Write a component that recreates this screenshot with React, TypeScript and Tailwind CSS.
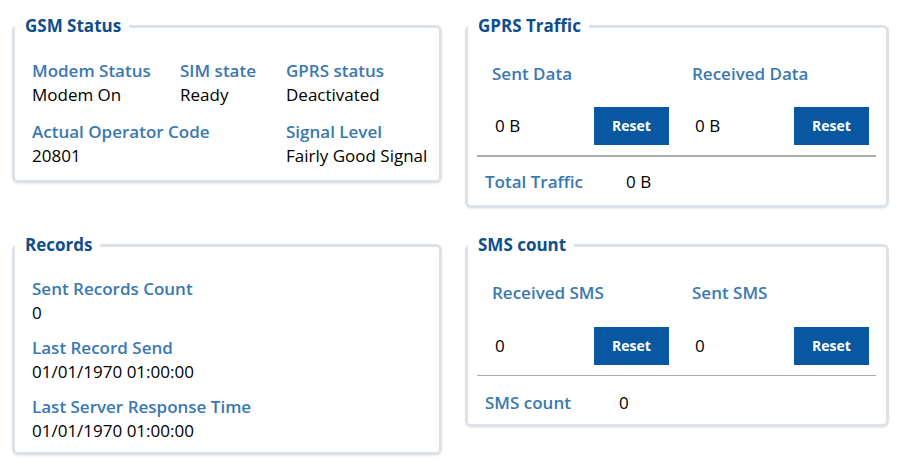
import React from "react";

const Label = ({ children }: { children: React.ReactNode }) => (
  <div className="text-[#3a78b2] font-semibold text-[17px] leading-[24px] whitespace-nowrap">{children}</div>
);
const Value = ({ children }: { children: React.ReactNode }) => (
  <div className="text-black text-[17px] leading-[24px] whitespace-nowrap">{children}</div>
);

const Box = ({ title, className, children }: { title: string; className?: string; children: React.ReactNode }) => (
  <fieldset className={"min-w-0 p-0 m-0 border-[3px] border-[#dde2e7] rounded-[6px] shadow-[0_1px_2px_rgba(0,0,0,0.08)] " + (className ?? "")}>
    <legend className="ml-0 pl-[10px] pr-[8px] text-[#0e4e8d] font-bold text-[17px] leading-[22px]">{title}</legend>
    {children}
  </fieldset>
);

const ResetBtn = () => (
  <button className="shrink-0 w-[75px] h-[38px] bg-[#0758a0] text-white font-bold text-[14px] leading-[38px]">Reset</button>
);

const Counter = ({ value }: { value: string }) => (
  <div className="w-[200px] shrink-0 flex items-center">
    <div className="w-[102px] shrink-0 pl-[3px]"><Value>{value}</Value></div>
    <ResetBtn />
  </div>
);

export default function App() {
  return (
    <div className="w-[912px] h-[471px] bg-white font-['Segoe_UI','Open_Sans',sans-serif] grid grid-cols-[430px_424px] grid-rows-[194px_230px] gap-x-[23px] gap-y-[25px] pl-[12px] pt-[15px]">
      <Box title="GSM Status" className="h-[168px]">
        <div className="grid grid-cols-[148px_106px_auto] gap-y-[13px] px-[17px] pt-[22px]">
          <div>
            <Label>Modem Status</Label>
            <Value>Modem On</Value>
          </div>
          <div>
            <Label>SIM state</Label>
            <Value>Ready</Value>
          </div>
          <div>
            <Label>GPRS status</Label>
            <Value>Deactivated</Value>
          </div>
          <div className="col-span-2">
            <Label>Actual Operator Code</Label>
            <Value>20801</Value>
          </div>
          <div>
            <Label>Signal Level</Label>
            <Value>Fairly Good Signal</Value>
          </div>
        </div>
      </Box>

      <Box title="GPRS Traffic" className="h-[193px]">
        <div className="pt-[25px]">
          <div className="flex pl-[24px]">
            <div className="w-[200px] shrink-0"><Label>Sent Data</Label></div>
            <div className="w-[200px] shrink-0"><Label>Received Data</Label></div>
          </div>
          <div className="flex pl-[24px] mt-[21px]">
            <Counter value="0 B" />
            <Counter value="0 B" />
          </div>
          <div className="h-[2px] bg-[#a9abad] mt-[10px] ml-[9px] mr-[10px]" />
          <div className="flex items-center mt-[13px] pl-[17px]">
            <div className="w-[141px] shrink-0"><Label>Total Traffic</Label></div>
            <Value>0 B</Value>
          </div>
        </div>
      </Box>

      <Box title="Records" className="h-[221px]">
        <div className="flex flex-col gap-[11px] px-[17px] pt-[21px]">
          <div>
            <Label>Sent Records Count</Label>
            <Value>0</Value>
          </div>
          <div>
            <Label>Last Record Send</Label>
            <Value>01/01/1970 01:00:00</Value>
          </div>
          <div>
            <Label>Last Server Response Time</Label>
            <Value>01/01/1970 01:00:00</Value>
          </div>
        </div>
      </Box>

      <Box title="SMS count" className="h-[193px]">
        <div className="pt-[25px]">
          <div className="flex pl-[24px]">
            <div className="w-[200px] shrink-0"><Label>Received SMS</Label></div>
            <div className="w-[200px] shrink-0"><Label>Sent SMS</Label></div>
          </div>
          <div className="flex pl-[24px] mt-[22px]">
            <Counter value="0" />
            <Counter value="0" />
          </div>
          <div className="h-[1px] bg-[#a9abad] mt-[10px] ml-[9px] mr-[10px]" />
          <div className="flex items-center mt-[15px] pl-[17px]">
            <div className="w-[134px] shrink-0"><Label>SMS count</Label></div>
            <Value>0</Value>
          </div>
        </div>
      </Box>
    </div>
  );
}
